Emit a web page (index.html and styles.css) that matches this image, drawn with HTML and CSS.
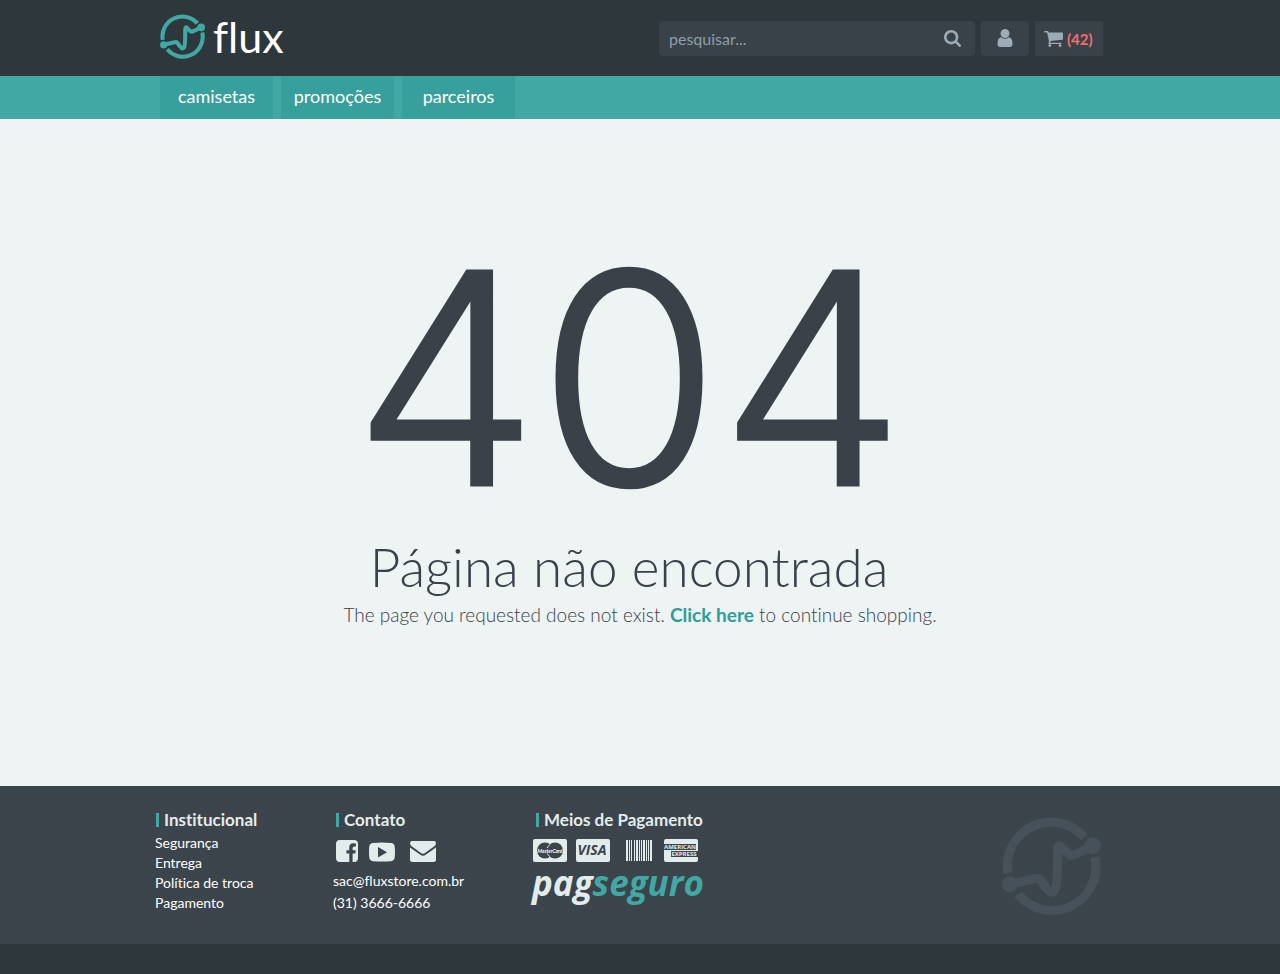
FILE: index.html
```html
<!DOCTYPE html>
<html lang="pt-BR">
<head>
<meta charset="utf-8">
<meta name="viewport" content="width=device-width, initial-scale=1">
<title>flux - Página não encontrada</title>
<link rel="stylesheet" href="styles.css">
</head>
<body>
<svg class="sprite" aria-hidden="true">
  <symbol id="mark" viewBox="38 52 296 292">
    <g fill="none" stroke="currentColor" stroke-width="27">
      <path d="M56 220A131 131 0 0 1 284 112M316 172A131 131 0 0 1 86 282"/>
      <path stroke-linejoin="round" d="M62 253L136 236Q149 233 156 245L172 265Q188 285 197 269Q204 256 204 170Q203 128 214 140L238 163Q245 169 253 165L309 138"/>
    </g>
    <circle cx="309" cy="138" r="25" fill="currentColor"/>
    <circle cx="62" cy="253" r="24" fill="currentColor"/>
  </symbol>
</svg>

<header class="topbar">
  <div class="container topbar-inner">
    <a class="brand" href="#">
      <svg class="brand-mark" aria-hidden="true"><use href="#mark"/></svg>
      <span class="brand-name">flux</span>
    </a>
    <div class="tools">
      <form class="search" role="search">
        <input class="search-input" type="text" placeholder="pesquisar..." aria-label="pesquisar">
        <button class="search-button" type="button" aria-label="Buscar">
          <svg class="icon-search" viewBox="0 128 1664 1664" aria-hidden="true"><path d="M1152 832q0-185-131.500-316.500t-316.500-131.500-316.500 131.500-131.500 316.500 131.500 316.500 316.500 131.500 316.500-131.500 131.500-316.500zm512 832q0 52-38 90t-90 38q-54 0-90-38l-343-342q-179 124-399 124-143 0-273.500-55.500t-225-150-150-225-55.500-273.500 55.500-273.500 150-225 225-150 273.500-55.500 273.500 55.500 225 150 150 225 55.500 273.500q0 220-124 399l343 343q37 37 37 90z"/></svg>
        </button>
      </form>
      <button class="account" type="button" aria-label="Minha conta">
        <svg class="icon-user" viewBox="256 128 1280 1536" aria-hidden="true"><path d="M1536 1399q0 109-62.500 187t-150.500 78h-854q-88 0-150.500-78t-62.500-187q0-85 8.500-160.500t31.500-152 58.500-131 94-89 134.500-34.500q131 128 313 128t313-128q76 0 134.500 34.500t94 89 58.500 131 31.500 152 8.500 160.500zm-256-887q0 159-112.500 271.500t-271.500 112.500-271.500-112.500-112.500-271.500 112.500-271.500 271.500-112.500 271.500 112.500 112.500 271.500z"/></svg>
      </button>
      <a class="cart" href="#" aria-label="Carrinho (42)">
        <svg class="icon-cart" viewBox="64 256 1664 1408" aria-hidden="true"><path d="M704 1536q0 52-38 90t-90 38-90-38-38-90 38-90 90-38 90 38 38 90zm896 0q0 52-38 90t-90 38-90-38-38-90 38-90 90-38 90 38 38 90zm128-1088v512q0 24-16.500 42.500t-40.500 21.500l-1044 122q13 60 13 70 0 16-24 64h920q26 0 45 19t19 45-19 45-45 19h-1024q-26 0-45-19t-19-45q0-11 8-31.500t16-36 21.500-40 15.500-29.500l-177-823h-204q-26 0-45-19t-19-45 19-45 45-19h256q16 0 28.500 6.500t19.500 15.500 13 24.500 8 26 5.500 29.500 4.500 26h1201q26 0 45 19t19 45z"/></svg>
        <span class="cart-count">(42)</span>
      </a>
    </div>
  </div>
</header>

<nav class="menu">
  <div class="container menu-inner">
    <a class="menu-item" href="#">camisetas</a>
    <a class="menu-item" href="#">promoções</a>
    <a class="menu-item" href="#">parceiros</a>
  </div>
</nav>

<main class="error">
  <div class="error-head">
    <div class="error-code">404</div>
    <h1 class="error-title">Página não encontrada</h1>
  </div>
  <p class="error-text">The page you requested does not exist. <a class="error-link" href="#">Click here</a> to continue shopping.</p>
</main>

<footer class="footer">
  <div class="container footer-inner">
    <section class="col-about">
      <h2 class="footer-title">Institucional</h2>
      <ul class="links">
        <li><a href="#">Segurança</a></li>
        <li><a href="#">Entrega</a></li>
        <li><a href="#">Política de troca</a></li>
        <li><a href="#">Pagamento</a></li>
      </ul>
    </section>
    <section class="col-contact">
      <h2 class="footer-title">Contato</h2>
      <div class="social">
        <a href="#" aria-label="Facebook"><svg class="icon-facebook" viewBox="0 0 22 22" aria-hidden="true"><path fill-rule="evenodd" d="M4 0H18Q22 0 22 4V18Q22 22 18 22H16.600V13.500H19.300L19.700 10.200H16.600V8.200Q16.600 6.500 18.200 6.500H19.900V3.500Q19 3.300 17.500 3.300Q13.300 3.300 13.300 7.500V10.200H10.500V13.500H13.300V22H4Q0 22 0 18V4Q0 0 4 0Z"/></svg></a>
        <a href="#" aria-label="YouTube"><svg class="icon-youtube" viewBox="0 0 26 19" aria-hidden="true"><path fill-rule="evenodd" d="M4 .4Q13-.3 22 .4Q25.300.600 25.700 4Q26.300 9.500 25.700 15Q25.300 18.400 22 18.700Q13 19.300 4 18.700Q.7 18.400.3 15Q-.3 9.500.3 4Q.7.6 4 .4ZM9 4.500V15L18 9.800Z"/></svg></a>
        <a href="#" aria-label="E-mail"><svg class="icon-mail" viewBox="0 0 26 21" aria-hidden="true"><path d="M2 0H24Q26 0 26 2Q26 4 24 5.500L15 12Q13 13.500 11 12L2 5.500Q0 4 0 2Q0 0 2 0ZM0 6.500L10 13.500Q13 16 16 13.500L26 6.500V18.500Q26 21 23.500 21H2.500Q0 21 0 18.500Z"/></svg></a>
      </div>
      <a class="contact-line" href="#">sac@fluxstore.com.br</a>
      <span class="contact-line">(31) 3666-6666</span>
    </section>
    <section class="col-pay">
      <h2 class="footer-title">Meios de Pagamento</h2>
      <div class="cards">
        <svg class="card" viewBox="0 0 34 23" role="img" aria-label="MasterCard">
          <rect class="paper" width="34" height="23" rx="2"/>
          <circle class="ink" cx="12" cy="11.500" r="8"/><circle class="ink" cx="22" cy="11.500" r="8"/>
          <path class="slit" d="M17 5.300Q14.500 8 14.200 9M17 17.700Q14.500 15.500 14.200 14.500"/>
          <text class="mc-text" x="17" y="14" text-anchor="middle">MasterCard</text>
        </svg>
        <svg class="card" viewBox="0 0 34 23" role="img" aria-label="Visa">
          <rect class="paper" width="34" height="23" rx="2"/>
          <text class="visa-text" x="16" y="16" text-anchor="middle">VISA</text>
        </svg>
        <svg class="barcode" viewBox="0 0 26 21" role="img" aria-label="Boleto">
          <path class="paper" d="M0 0H2V21H0ZM3 0H4V21H3ZM5 0H6V21H5ZM8 0H9V21H8ZM10 0H12V21H10ZM13 0H14V21H13ZM15 0H16V21H15ZM17 0H19V21H17ZM20 0H21V21H20ZM22 0H23V21H22ZM24 0H26V21H24Z"/>
        </svg>
        <svg class="card" viewBox="0 0 34 23" role="img" aria-label="American Express">
          <rect class="paper" width="34" height="23" rx="2"/>
          <path class="ink" d="M0 5H32V11H0ZM7 12H34V18H7Z"/>
          <text class="amex-text" x="16" y="10" text-anchor="middle">AMERICAN</text>
          <text class="amex-text" x="20" y="17" text-anchor="middle">EXPRESS</text>
        </svg>
      </div>
      <div class="pagseguro">pag<span class="pagseguro-end">seguro</span></div>
    </section>
    <svg class="footer-mark" aria-hidden="true"><use href="#mark"/></svg>
  </div>
</footer>
<div class="baseline"></div>
</body>
</html>
```
FILE: styles.css
```css
* { box-sizing: border-box; }

body {
  margin: 0;
  min-height: 100vh;
  display: flex;
  flex-direction: column;
  background: #eef3f4;
  color: #3a4149;
  font-family: Lato, "Open Sans", sans-serif;
  font-variant-ligatures: none;
}

a { color: inherit; text-decoration: none; }
button { border: 0; padding: 0; cursor: pointer; }
svg { display: block; fill: currentColor; }
.sprite { display: none; }

.container {
  width: 100%;
  max-width: 960px;
  margin: 0 auto;
}

/* Header */
.topbar { background: #2d373c; }

.topbar-inner {
  display: flex;
  align-items: center;
  justify-content: space-between;
  min-height: 76px;
  padding-right: 17px;
}

.brand {
  display: flex;
  align-items: center;
  gap: 8px;
  padding-bottom: 3px;
  color: #41a8a4;
}

.brand-mark { width: 45px; height: 45px; }

.brand-name {
  color: #fff;
  font-size: 43px;
  line-height: 52px;
}

.tools {
  display: flex;
  align-items: center;
  gap: 6px;
  color: #9dabb8;
}

.search {
  display: flex;
  width: 316px;
  height: 35px;
  margin: 0;
  border-radius: 4px;
  background: #3a4249;
}

.search-input {
  flex: 1;
  min-width: 0;
  padding: 0 10px;
  border: 0;
  background: none;
  color: inherit;
  font: 400 16px Lato, sans-serif;
}

.search-input::placeholder { color: #8f9ea9; opacity: 1; }

.search-button {
  display: grid;
  place-items: center;
  width: 46px;
  background: none;
  color: inherit;
}

.account {
  display: grid;
  place-items: center;
  width: 48px;
  height: 35px;
  border-radius: 4px;
  background: #3a4249;
  color: inherit;
}

.icon-search { width: 17px; height: 17px; }
.icon-user { width: 16px; height: 18px; }
.icon-cart { width: 19px; height: 16px; }

.cart {
  display: flex;
  align-items: center;
  gap: 4px;
  width: 68px;
  height: 35px;
  padding: 2px 0 0 9px;
  border-radius: 2px;
  background: #3a4249;
}

.cart-count { color: #f56c6c; font-size: 15px; font-weight: 700; }

/* Menu */
.menu { background: #41a8a4; }

.menu-inner { display: flex; gap: 8px; }

.menu-item {
  width: 113px;
  background: #38a09c;
  color: #fff;
  font-size: 18px;
  line-height: 41px;
  padding-bottom: 2px;
  text-align: center;
}

/* Error message */
.error {
  flex: 1;
  display: flex;
  flex-direction: column;
  align-items: center;
  padding: 102px 16px 16px;
}

.error-head { padding-right: 22px; text-align: center; }

.error-code {
  font-family: Inter, sans-serif;
  font-size: 294px;
  font-weight: 300;
  line-height: 314px;
  -webkit-text-stroke: 3px #3a4149;
}

.error-title {
  margin: 0;
  font-size: 53px;
  font-weight: 300;
  line-height: 64px;
}

.error-text {
  margin: 0;
  font-size: 19px;
  font-weight: 300;
  line-height: 32px;
}

.error-link { color: #2c9e9a; font-weight: 700; }

/* Footer */
.footer {
  color: #fff;
  background: #3c444b conic-gradient(#3a4249 25%, #3e474e 0 50%, #3a4249 0 75%, #3e474e 0) 0 0 / 2px 2px;
}

.footer-inner {
  display: grid;
  grid-template-columns: 180px 200px 1fr auto;
  max-width: 970px;
  min-height: 158px;
  padding: 24px 24px 24px 0;
}

.footer-title {
  margin: 0;
  display: flex;
  align-items: center;
  gap: 5px;
  color: #e3ecec;
  font-size: 17px;
  font-weight: 700;
  line-height: 20px;
}

.footer-title::before {
  content: "";
  width: 3px;
  height: 14px;
  margin-left: 1px;
  background: #41a8a4;
}

.links {
  margin: 3px 0 0;
  padding: 0;
  list-style: none;
  font-size: 14px;
  line-height: 20px;
}

.social {
  display: flex;
  align-items: flex-end;
  gap: 11px;
  margin-top: 10px;
  padding-left: 1px;
  color: #e3ecec;
}

.icon-facebook { width: 22px; height: 22px; }
.icon-youtube { width: 26px; height: 20px; }
.icon-mail { width: 26px; height: 21px; }
.social a:last-child { margin-left: 4px; }

.col-contact > .contact-line {
  display: block;
  margin-left: -2px;
  font-size: 14px;
  line-height: 22px;
}

.social + .contact-line { padding-top: 8px; }

.cards {
  display: flex;
  align-items: center;
  justify-content: space-between;
  width: 165px;
  margin: 9px 0 0 -2px;
}

.card { width: 34px; height: 23px; }
.barcode { width: 26px; height: 21px; }
.card:nth-child(2) { margin-right: 6px; }
.card:last-child { margin-left: 3px; }
.paper { fill: #e3ecec; }
.ink { fill: #3c444b; }
.slit { fill: none; stroke: #e3ecec; }
.mc-text { fill: #fff; font: italic 700 5px Lato, sans-serif; }
.visa-text { fill: #3c444b; font: italic 700 14px "Open Sans", sans-serif; }
.amex-text { fill: #e3ecec; font: 700 6px "Open Sans", sans-serif; }

.pagseguro {
  margin-left: -3px;
  color: #e3ecec;
  font: italic 700 35px/42px "Open Sans", sans-serif;
}

.pagseguro-end { color: #41a8a4; }

.footer-mark {
  width: 99px;
  height: 98px;
  margin-top: 7px;
  color: #46515a;
}

.baseline { height: 30px; background: #2d373c; }
```
